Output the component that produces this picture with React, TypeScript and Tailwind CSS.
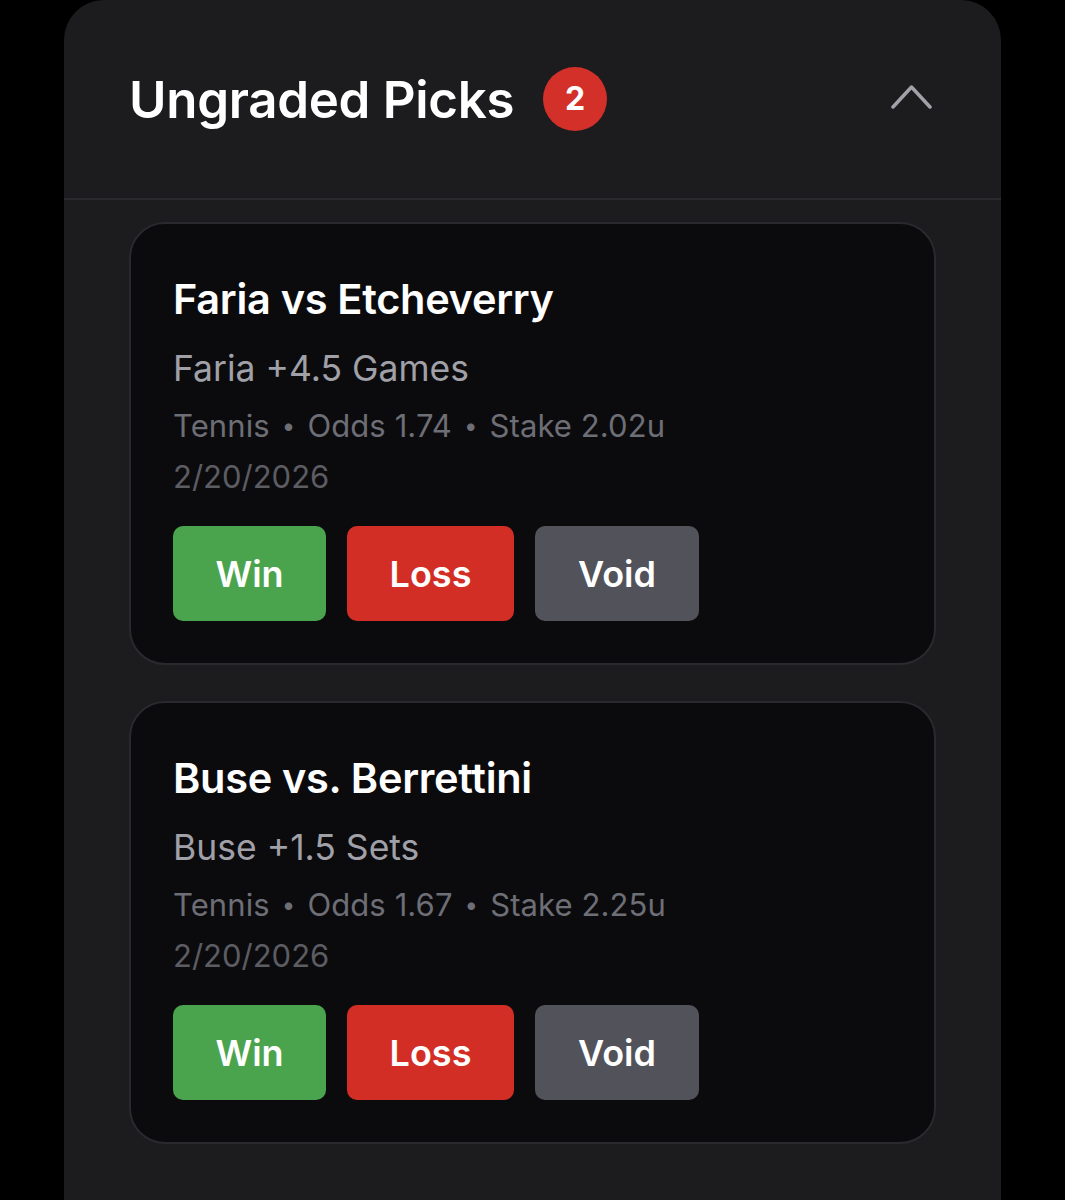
const picks = [
  {
    id: 1,
    match: 'Faria vs Etcheverry',
    pick: 'Faria +4.5 Games',
    sport: 'Tennis',
    odds: '1.74',
    stake: '2.02u',
    date: '2/20/2026',
  },
  {
    id: 2,
    match: 'Buse vs. Berrettini',
    pick: 'Buse +1.5 Sets',
    sport: 'Tennis',
    odds: '1.67',
    stake: '2.25u',
    date: '2/20/2026',
  },
];

export default function App() {
  return (
    <div
      className="min-h-[1200px] bg-black overflow-hidden"
      style={{ fontFamily: 'Inter, "Noto Sans", sans-serif' }}
    >
      <div className="mx-[64px] w-[937px] h-[1260px] bg-[#1c1c1f] rounded-[40px]">
        {/* Header */}
        <div className="h-[200px] flex items-center justify-between pl-[65px] pr-[69px] border-b-2 border-[#2a2a2e]">
          <div className="flex items-center gap-[29px]">
            <h2 className="text-[51px] font-semibold text-white tracking-[-0.3px] leading-none">Ungraded Picks</h2>
            <span className="w-[64px] h-[64px] rounded-full bg-[#d3302a] text-white text-[32px] font-bold flex items-center justify-center">
              2
            </span>
          </div>
          <svg width="41" height="26" viewBox="0 0 41 26" fill="none" className="-mt-[4px]">
            <path d="M2 23 L20.5 3 L39 23" stroke="#a1a1a8" strokeWidth="3.5" strokeLinecap="round" strokeLinejoin="round" />
          </svg>
        </div>

        {/* Picks */}
        <div className="px-[65px] pt-[22px] flex flex-col gap-[36px]">
          {picks.map((p) => (
            <div key={p.id} className="bg-[#0b0b0d] border-2 border-[#2a2a2e] rounded-[36px] pl-[42px] pt-[55px] pb-[42px]">
              <h3 className="text-[41.5px] font-semibold text-white leading-none tracking-[-0.3px]">{p.match}</h3>
              <p className="mt-[30px] text-[35.5px] text-[#a0a0a8] leading-none">{p.pick}</p>
              <p className="mt-[24px] text-[31px] text-[#6e6e76] leading-none tracking-[0.1px]">
                {p.sport}<span className="text-[24px] relative -top-[3px] mx-[12px]">•</span>Odds {p.odds}
                <span className="text-[24px] relative -top-[3px] mx-[12px]">•</span>Stake {p.stake}
              </p>
              <p className="mt-[20px] text-[31px] text-[#5c5c63] leading-none">{p.date}</p>
              <div className="mt-[34px] flex gap-[21px]">
                <button className="w-[153px] h-[95px] rounded-[10px] bg-[#4aa44e] text-white text-[36px] font-semibold">Win</button>
                <button className="w-[167px] h-[95px] rounded-[10px] bg-[#d32e25] text-white text-[36px] font-semibold">Loss</button>
                <button className="w-[164px] h-[95px] rounded-[10px] bg-[#52525a] text-white text-[36px] font-semibold">Void</button>
              </div>
            </div>
          ))}
        </div>
      </div>
    </div>
  );
}
